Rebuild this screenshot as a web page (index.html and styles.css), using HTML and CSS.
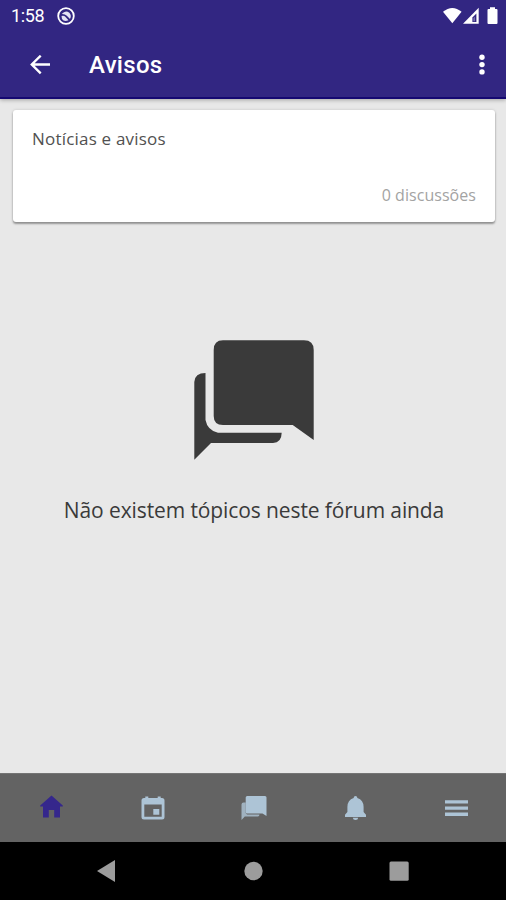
FILE: index.html
```html
<!DOCTYPE html>
<html lang="pt">
<head>
<meta charset="utf-8">
<title>Avisos</title>
<link rel="stylesheet" href="styles.css">
</head>
<body>
<header class="header">
  <div class="status">
    <span class="clock">1:58</span>
    <svg class="status-app" viewBox="0 0 18 18"><circle cx="9" cy="9" r="7.8" fill="none" stroke="#fff" stroke-width="1.8"/><path d="M4.700 7Q8.500 2.700 12.300 5.800Q15 8.800 13 12L9.800 8.800Q8 6.800 4.700 7ZM4.500 9Q7 8.300 8.300 9.800L11.500 13.200Q7 15 5 12Z" fill="#e4e3f4"/></svg>
    <svg class="status-icons" viewBox="0 0 56 18"><path d="M0 4.800Q9.300-3 18.600 4.800L9.300 16.200Z" fill="#fff"/><path d="M20 16.800 35.700.800V16.800Z" fill="#fff"/><path d="M29.400 15V10.500L33.400 6.500V15Z" fill="#322682"/><path d="M30.300 14.200V11.300L32 9.800V14.200Z" fill="#7770ad"/><path d="M47 .300H52V2H53.500Q54.500 2 54.500 3V16Q54.500 17 53.500 17H45.500Q44.500 17 44.500 16V3Q44.500 2 45.500 2H47Z" fill="#fff"/></svg>
  </div>
  <div class="toolbar">
    <svg class="back" viewBox="0 0 20 20"><path d="M20 9.500H2M10.700.7 1.800 9.500l8.900 8.800" fill="none" stroke="#fff" stroke-width="2.400"/></svg>
    <h1 class="title">Avisos</h1>
    <svg class="more" viewBox="0 0 6 22"><circle cx="3" cy="3.300" r="2.700"/><circle cx="3" cy="10.600" r="2.700"/><circle cx="3" cy="17.900" r="2.700"/></svg>
  </div>
</header>
<main class="content">
  <section class="card">
    <p class="card-title">Notícias e avisos</p>
    <p class="card-count">0 discussões</p>
  </section>
  <section class="empty">
    <svg class="empty-icon" viewBox="0 0 120 120"><path d="M29 .3H110Q119.700.3 119.700 10V100L98.700 85H29Q19.700 85 19.700 76V10Q19.700.3 29 .3ZM11.500 33V80Q13.500 90.500 24 92.700H87.700Q87.500 102.800 79 103H17L.3 119.700V42Q.8 33 11.500 33Z"/></svg>
    <p class="empty-text">Não existem tópicos neste fórum ainda</p>
  </section>
</main>
<nav class="tabs">
  <div class="tab active"><svg viewBox="0 0 24 24"><path d="M11.500.5 22.800 10.500V11.500H20V22.500H14.200V15H8.800V22.500H3V11.500H.2V10.500Z"/></svg></div>
  <div class="tab"><svg viewBox="0 0 24 24"><path fill-rule="evenodd" d="M4.300.5H7.300V2H16.700V.5H19.700V2H21Q23.500 2 23.500 4.500V21Q23.500 23.500 21 23.500H3Q.5 23.500.5 21V4.500Q.5 2 3 2H4.300ZM3.300 8.500V20.700H20.700V8.500ZM12.300 13H18.300V18.800H12.300Z"/></svg></div>
  <div class="tab"><svg class="chat" viewBox="0 0 26 24"><path class="chat-back" d="M2.500 6.600H4.700V17L6 18.500H18.500Q18.400 20.500 16.800 20.600H3.800L.5 24V8.400Q.6 6.800 2.500 6.600Z"/><path d="M6.200 0H24Q25.500 0 25.500 1.500V20L21.500 17.500H6.200Q4.700 17.500 4.700 16V1.500Q4.700 0 6.200 0Z"/></svg></div>
  <div class="tab"><svg viewBox="0 0 24 24"><path d="M12.500 0Q14.200 0 14.400 2.100Q20.500 4 20.600 11V16L23 18.800V21H2V18.800L4.400 16V11Q4.500 4 10.600 2.100Q10.800 0 12.500 0ZM9.800 21.800H15.200Q15 24 12.500 24Q10 24 9.800 21.800Z"/></svg></div>
  <div class="tab"><svg viewBox="0 0 24 24"><path d="M1 4.300H24V7.600H1ZM1 10.500H24V13.700H1ZM1 16.600H24V19.900H1Z"/></svg></div>
</nav>
<footer class="system">
  <svg viewBox="0 0 22 22"><path d="M1 11 19 0V22Z"/></svg>
  <svg viewBox="0 0 22 22"><circle cx="11.500" cy="11" r="9.200"/></svg>
  <svg viewBox="0 0 22 22"><rect x="1.500" y="1.500" width="19.200" height="19.200" rx="1.500"/></svg>
</footer>
</body>
</html>
```
FILE: styles.css
```css
* { box-sizing: border-box; margin: 0; padding: 0; }
body {
  width: 506px;
  height: 900px;
  display: flex;
  flex-direction: column;
  overflow: hidden;
  background: #e8e8e8;
  font-family: "Open Sans", "Noto Sans", sans-serif;
}
svg { display: block; flex: none; }
.header {
  height: 99px;
  background: #322682;
  border-bottom: 2px solid #150872;
  box-shadow: 0 1px 4px rgba(0, 0, 0, .3);
  color: #fff;
  font-family: Roboto, sans-serif;
}
.status { height: 32px; display: flex; align-items: center; padding: 0 7px 0 11px; }
.clock { width: 46px; font-size: 18px; line-height: 32px; letter-spacing: -.4px; }
.status-app { width: 18px; height: 18px; }
.status-icons { width: 56px; height: 18px; margin-left: auto; }
.toolbar { height: 65px; display: flex; align-items: center; padding: 0 21px 0 30px; }
.back { width: 20px; height: 20px; }
.title { margin-left: 39px; font-size: 24px; font-weight: 500; line-height: 32px; letter-spacing: .3px; }
.more { width: 6px; height: 22px; margin-left: auto; fill: #fff; }
.content { flex: 1; padding: 11px 11px 0 13px; }
.card {
  height: 112px;
  display: flex;
  flex-direction: column;
  justify-content: space-between;
  padding: 17px 19px 15px;
  background: #fff;
  border-radius: 3px;
  box-shadow: 0 2px 2px rgba(0, 0, 0, .34), 0 0 3px rgba(0, 0, 0, .16);
}
.card-title { font-size: 17px; line-height: 24px; letter-spacing: .2px; color: #515151; }
.card-count { align-self: flex-end; font-size: 16px; line-height: 24px; letter-spacing: .05px; color: #a3a3a3; }
.empty { display: flex; flex-direction: column; align-items: center; padding-top: 118px; }
.empty-icon { width: 120px; height: 120px; fill: #3a3a3a; }
.empty-text { margin-top: 34px; font-size: 21px; line-height: 32px; letter-spacing: -.1px; color: #3a3a3a; white-space: nowrap; }
.tabs {
  height: 69px;
  display: grid;
  grid-template-columns: repeat(5, 1fr);
  align-items: center;
  justify-items: center;
  padding-left: 1px;
  background: #636363;
  border-top: 1px solid #747474;
}
.tab { fill: #adc4d6; }
.tab svg { width: 24px; height: 24px; }
.tab .chat { width: 26px; }
.chat-back { fill: #a0b2c0; }
.active { fill: #35278c; padding-bottom: 2px; }
.system {
  height: 58px;
  display: flex;
  justify-content: space-between;
  padding: 18px 96px 0;
  background: #000;
  fill: #9c9c9c;
}
.system svg { width: 22px; height: 22px; }
```
